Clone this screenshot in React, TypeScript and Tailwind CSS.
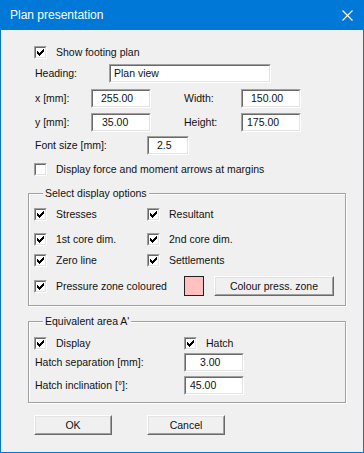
import React from 'react';

const font = { fontFamily: '"Liberation Sans", Arial, sans-serif' };

function Check({ checked }: { checked: boolean }) {
  return (
    <div className="w-[13px] h-[13px] shrink-0 border border-t-[#a0a0a0] border-l-[#a0a0a0] border-r-white border-b-white">
      <div className="w-full h-full border border-t-[#696969] border-l-[#696969] border-r-[#e3e3e3] border-b-[#e3e3e3] bg-white flex items-center justify-center">
        {checked && (
          <svg width="7" height="7" viewBox="0 0 7 7" shapeRendering="crispEdges">
            <rect x="6" y="0" width="1" height="1" fill="#000" />
            <rect x="5" y="1" width="2" height="1" fill="#000" />
            <rect x="0" y="2" width="1" height="1" fill="#000" />
            <rect x="4" y="2" width="3" height="1" fill="#000" />
            <rect x="0" y="3" width="2" height="1" fill="#000" />
            <rect x="3" y="3" width="3" height="1" fill="#000" />
            <rect x="0" y="4" width="5" height="1" fill="#000" />
            <rect x="1" y="5" width="3" height="1" fill="#000" />
            <rect x="2" y="6" width="1" height="1" fill="#000" />
          </svg>
        )}
      </div>
    </div>
  );
}

function CheckItem({ label, checked = true, width }: { label: string; checked?: boolean; width?: string }) {
  return (
    <div className={`flex items-center h-[13px] ${width ?? ''}`}>
      <Check checked={checked} />
      <span className="ml-[9px] leading-[13px] whitespace-nowrap">{label}</span>
    </div>
  );
}

function Field({ value, width, pad }: { value: string; width: string; pad: string }) {
  return (
    <div className={`h-[19px] shrink-0 border border-t-[#a0a0a0] border-l-[#a0a0a0] border-r-white border-b-white ${width}`}>
      <div className={`w-full h-full border border-t-[#696969] border-l-[#696969] border-r-[#e3e3e3] border-b-[#e3e3e3] bg-white flex items-center leading-none ${pad}`}>
        {value}
      </div>
    </div>
  );
}

function Button({ label, width }: { label: string; width: string }) {
  return (
    <div className={`h-[20px] shrink-0 border border-t-white border-l-white border-r-[#696969] border-b-[#696969] ${width}`}>
      <div className="w-full h-full border border-t-[#e3e3e3] border-l-[#e3e3e3] border-r-[#a0a0a0] border-b-[#a0a0a0] bg-[#f0f0f0] flex items-center justify-center leading-none">
        {label}
      </div>
    </div>
  );
}

function Group({ title, children, className }: { title: string; children: React.ReactNode; className: string }) {
  return (
    <fieldset className={`w-[318px] border border-[#a0a0a0] shadow-[inset_1px_1px_0_#fff,1px_1px_0_#fff] pl-[5px] ${className}`}>
      <legend className="ml-[9px] px-[2px] leading-[13px] bg-[#f0f0f0]">{title}</legend>
      {children}
    </fieldset>
  );
}

export default function App() {
  return (
    <div className="w-[364px] h-[453px] bg-[#0078d7] flex flex-col px-[1px] pb-[1px] text-[10.5px] text-[#111] antialiased" style={font}>
      <div className="h-[30px] shrink-0 flex items-center justify-between pl-[9px] pr-[10px] text-white text-[12px]">
        <span>Plan presentation</span>
        <svg width="11" height="11" viewBox="0 0 11 11">
          <path d="M0.5 0.5 L10.5 10.5 M10.5 0.5 L0.5 10.5" stroke="#fff" strokeWidth="1.1" />
        </svg>
      </div>
      <div className="flex-1 bg-[#f0f0f0] pl-[27px] pt-[1px] flex flex-col">
        <div className="pl-[6px] mt-[15px]">
          <CheckItem label="Show footing plan" />
        </div>

        <div className="pl-[6px] mt-[5px] flex items-center">
          <span className="w-[75px] pl-[1px]">Heading:</span>
          <Field value="Plan view" width="w-[162px]" pad="pl-[3px]" />
        </div>

        <div className="pl-[6px] mt-[6px] flex items-center">
          <span className="w-[57px] pl-[1px]">x [mm]:</span>
          <Field value="255.00" width="w-[60px]" pad="pl-[8px]" />
          <span className="w-[57px] ml-[33px]">Width:</span>
          <Field value="150.00" width="w-[60px]" pad="pl-[8px]" />
        </div>

        <div className="pl-[6px] mt-[5px] flex items-center">
          <span className="w-[57px] pl-[1px]">y [mm]:</span>
          <Field value="35.00" width="w-[60px]" pad="pl-[9px]" />
          <span className="w-[57px] ml-[33px]">Height:</span>
          <Field value="175.00" width="w-[60px]" pad="pl-[4px]" />
        </div>

        <div className="pl-[6px] mt-[4px] flex items-center">
          <span className="w-[113px] pl-[1px]">Font size [mm]:</span>
          <Field value="2.5" width="w-[42px]" pad="pl-[8px]" />
        </div>

        <div className="pl-[6px] mt-[8px]">
          <CheckItem label="Display force and moment arrows at margins" checked={false} />
        </div>

        <Group title="Select display options" className="mt-[11px] pb-[9px]">
          <div className="mt-[8px] flex">
            <CheckItem label="Stresses" width="w-[113px]" />
            <CheckItem label="Resultant" />
          </div>
          <div className="mt-[12px] flex">
            <CheckItem label="1st core dim." width="w-[113px]" />
            <CheckItem label="2nd core dim." />
          </div>
          <div className="mt-[8px] flex">
            <CheckItem label="Zero line" width="w-[113px]" />
            <CheckItem label="Settlements" />
          </div>
          <div className="mt-[9px] flex items-center h-[20px]">
            <CheckItem label="Pressure zone coloured" width="w-[150px]" />
            <div className="w-[20px] h-[20px] border border-[#202020] bg-[#ffc0c0]" />
            <div className="ml-[10px]">
              <Button label="Colour press. zone" width="w-[120px]" />
            </div>
          </div>
        </Group>

        <Group title="Equivalent area A'" className="mt-[9px] pb-[7px]">
          <div className="mt-[9px] flex">
            <CheckItem label="Display" width="w-[150px]" />
            <CheckItem label="Hatch" />
          </div>
          <div className="mt-[3px] flex items-center">
            <span className="w-[150px] pl-[1px]">Hatch separation [mm]:</span>
            <Field value="3.00" width="w-[60px]" pad="pl-[14px]" />
          </div>
          <div className="mt-[4px] flex items-center">
            <span className="w-[150px] pl-[1px]">Hatch inclination [°]:</span>
            <Field value="45.00" width="w-[60px]" pad="pl-[4px]" />
          </div>
        </Group>

        <div className="pl-[6px] mt-[12px] flex">
          <Button label="OK" width="w-[78px]" />
          <div className="ml-[35px]">
            <Button label="Cancel" width="w-[78px]" />
          </div>
        </div>
      </div>
    </div>
  );
}
